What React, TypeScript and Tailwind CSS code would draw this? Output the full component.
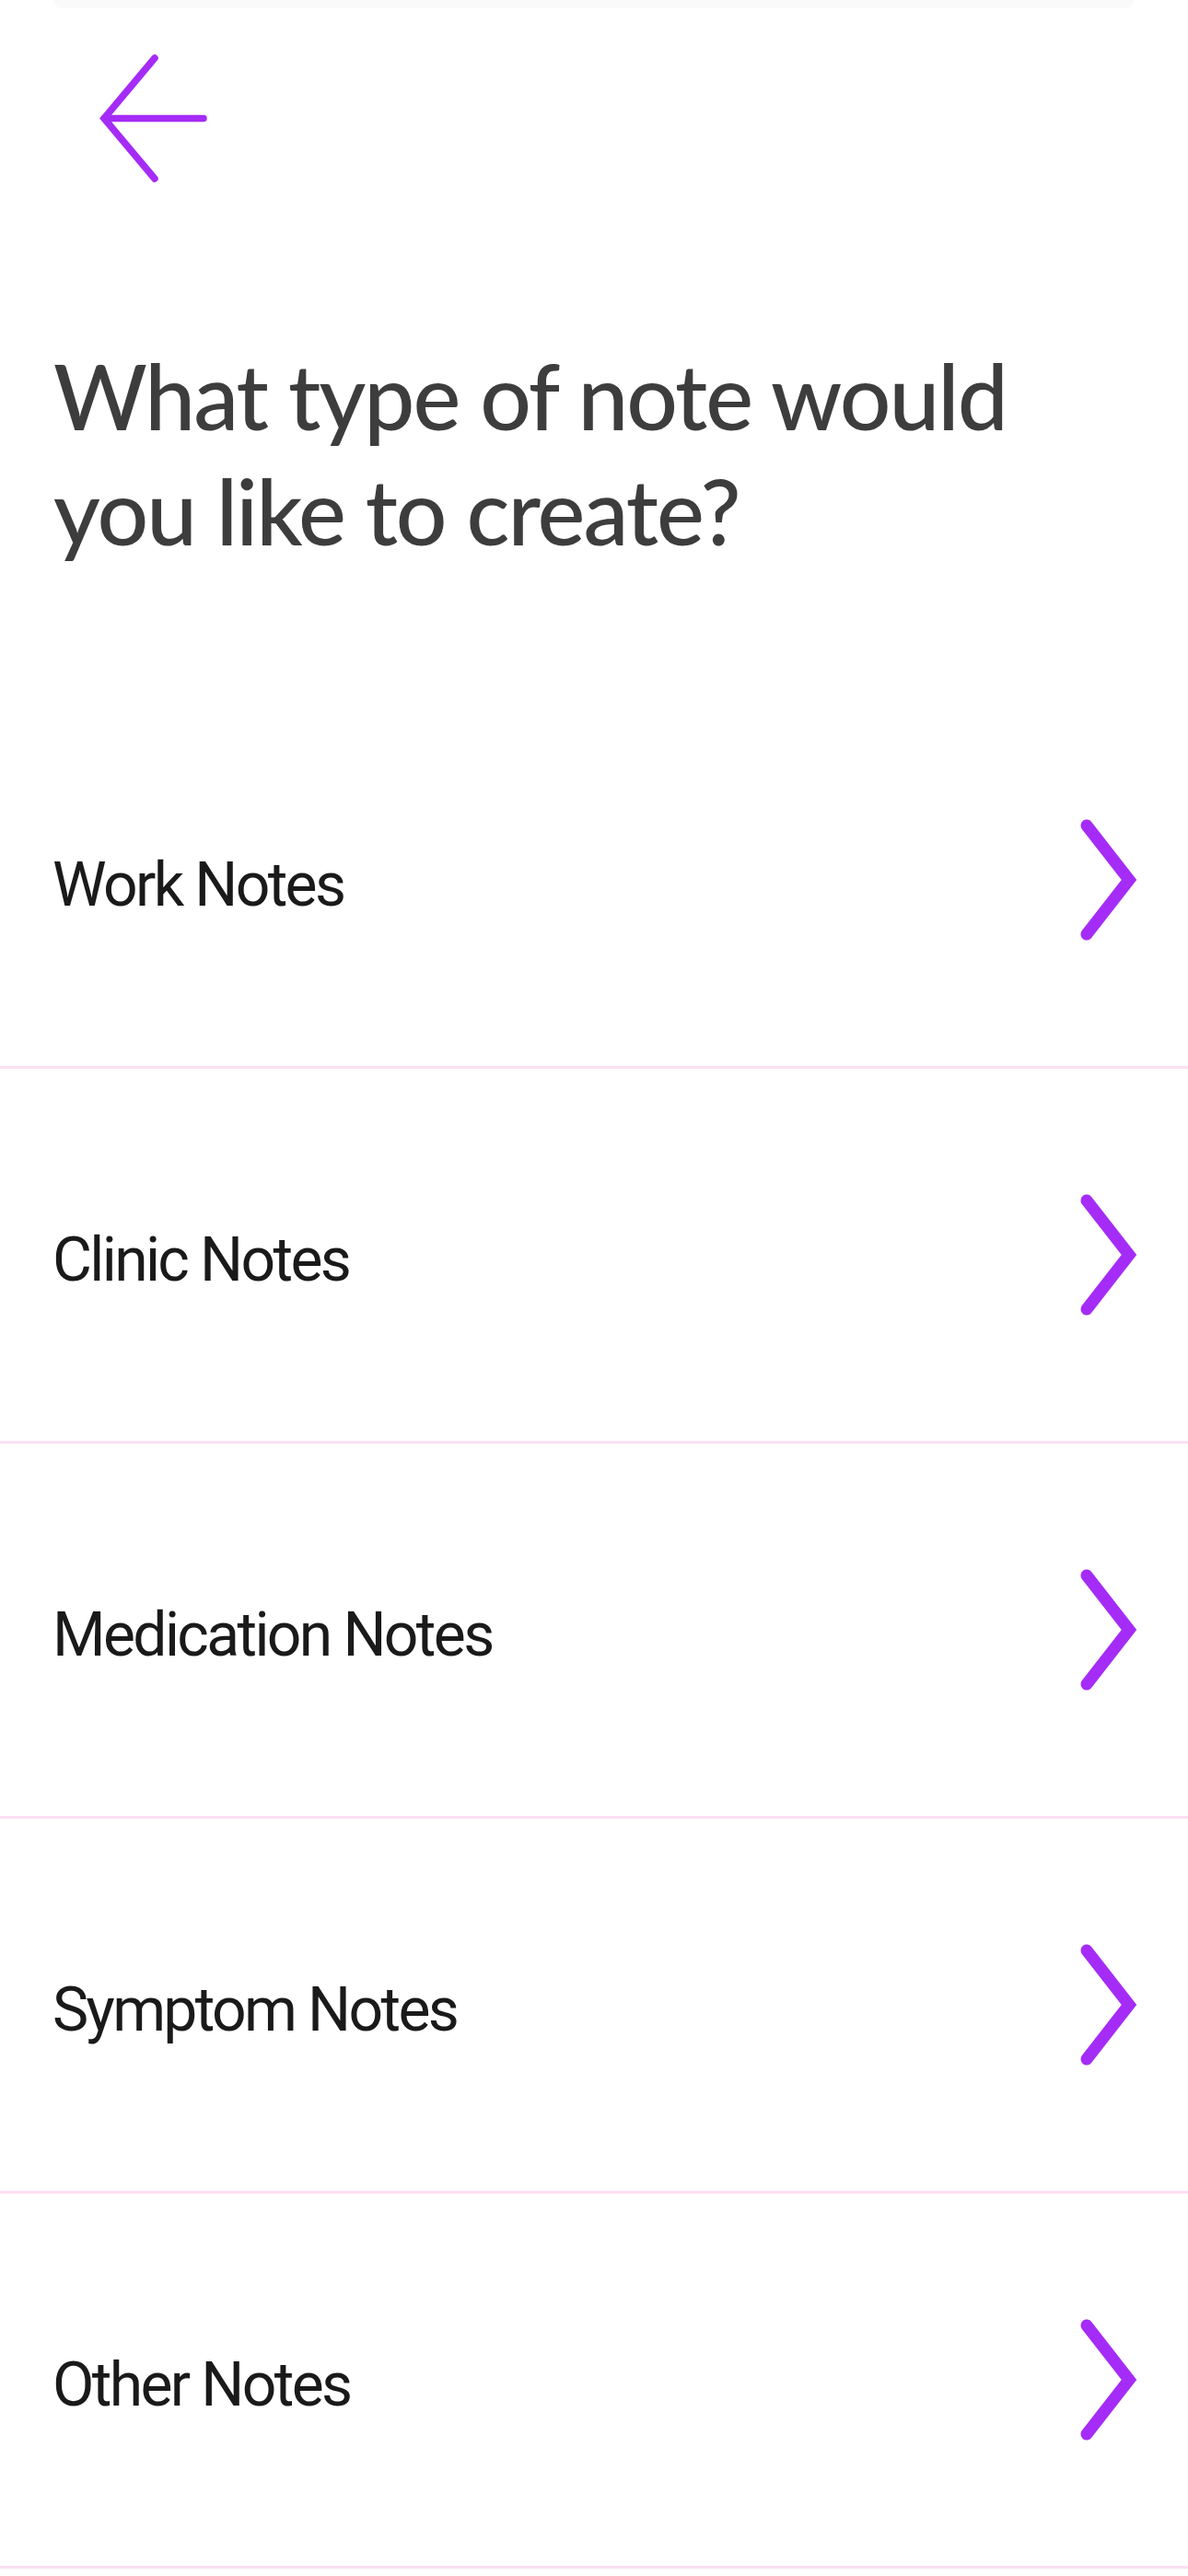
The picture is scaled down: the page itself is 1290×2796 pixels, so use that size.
const NOTE_TYPES = [
  "Work Notes",
  "Clinic Notes",
  "Medication Notes",
  "Symptom Notes",
  "Other Notes",
];

function BackArrow() {
  return (
    <svg width="120" height="143" viewBox="0 0 120 143" fill="none" aria-hidden>
      <path
        d="M61 6 L6 71.5 L61 137 M6 71.5 H114"
        stroke="#a52cf6"
        strokeWidth="7.5"
        strokeLinecap="round"
        strokeLinejoin="miter"
      />
    </svg>
  );
}

function Chevron() {
  return (
    <svg width="70" height="140" viewBox="0 0 70 140" fill="none" aria-hidden>
      <path
        d="M10 11 L56 70 L10 129"
        stroke="#a52cf6"
        strokeWidth="13"
        strokeLinecap="round"
        strokeLinejoin="miter"
      />
    </svg>
  );
}

export default function App() {
  return (
    <div className="w-[1290px] min-h-[2796px] bg-white font-['Lato',sans-serif]">
      {/* faint top edge */}
      <div className="mx-[58px] h-[9px] rounded-b-[10px] bg-[#fafafa]" />

      {/* header */}
      <div className="mt-[48px] pl-[107px]">
        <button className="block">
          <BackArrow />
        </button>
      </div>

      {/* question */}
      <h1 className="mt-[167px] pl-[58px] pr-[60px] text-[98px] leading-[125px] font-medium text-[#3d3d3d] tracking-[-0.02em]">
        What type of note would
        <br />
        you like to create?
      </h1>

      {/* list */}
      <ul className="mt-[136px]">
        {NOTE_TYPES.map((label) => (
          <li
            key={label}
            className="flex h-[407px] items-center justify-between border-b-[3px] border-[#fcdff3] pl-[57px] pr-[50px]"
          >
            <span className="font-['Roboto',sans-serif] text-[66px] leading-none font-normal text-[#1a1a1a] tracking-[-0.04em] pt-[12px]">
              {label}
            </span>
            <Chevron />
          </li>
        ))}
      </ul>
    </div>
  );
}
